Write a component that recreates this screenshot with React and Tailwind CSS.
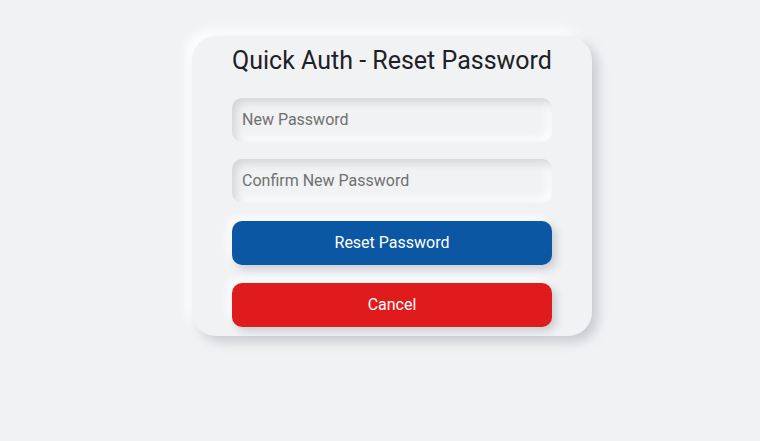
export default function App() {
  return (
    <div className="min-h-[441px] w-full bg-[#f1f2f4] flex justify-center pt-[36px]" style={{ fontFamily: 'Roboto, "Liberation Sans", sans-serif' }}>
      <div className="ml-[24px] w-[400px] h-[300px] rounded-[24px] bg-[#f1f2f4] shadow-[6px_6px_12px_#c9cbcf,-6px_-6px_12px_#ffffff] flex flex-col items-center px-10 pt-[9px]">
        <h1 className="text-[25px] leading-[32px] text-[#1d2024] font-normal whitespace-nowrap">Quick Auth - Reset Password</h1>
        <input
          type="password"
          placeholder="New Password"
          className="mt-[21px] w-[320px] h-[44px] rounded-[10px] bg-[#f1f2f4] px-[10px] pb-[1px] text-[16px] text-[#333] placeholder:text-[#707070] outline-none shadow-[inset_4px_4px_8px_#d3d5d8,inset_-4px_-4px_8px_#ffffff]"
        />
        <input
          type="password"
          placeholder="Confirm New Password"
          className="mt-[17px] w-[320px] h-[44px] rounded-[10px] bg-[#f1f2f4] px-[10px] pb-[1px] text-[16px] text-[#333] placeholder:text-[#707070] outline-none shadow-[inset_4px_4px_8px_#d3d5d8,inset_-4px_-4px_8px_#ffffff]"
        />
        <button className="mt-[18px] w-[320px] h-[44px] rounded-[10px] bg-[#0b57a4] text-white text-[16px] shadow-[4px_4px_8px_#c9cbcf,-4px_-4px_8px_#ffffff]">
          Reset Password
        </button>
        <button className="mt-[18px] w-[320px] h-[44px] rounded-[10px] bg-[#e01b1c] text-white text-[16px] shadow-[4px_4px_8px_#c9cbcf,-4px_-4px_8px_#ffffff]">
          Cancel
        </button>
      </div>
    </div>
  );
}
